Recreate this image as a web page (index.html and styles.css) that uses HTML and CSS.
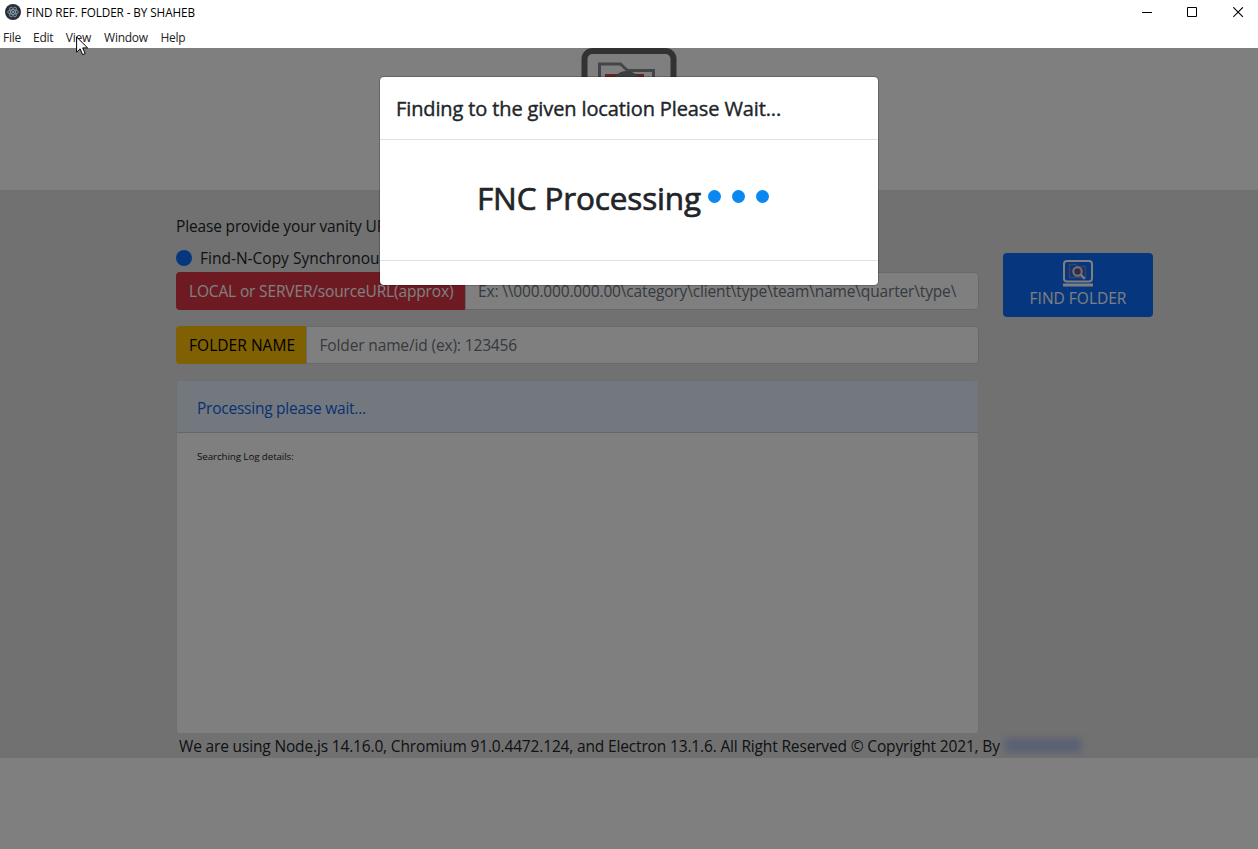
FILE: index.html
```html
<!DOCTYPE html>
<html lang="en">
<head>
<meta charset="utf-8">
<title>FIND REF. FOLDER - BY SHAHEB</title>
<link rel="stylesheet" href="styles.css">
</head>
<body>
<header class="titlebar">
  <svg class="app-icon" width="16" height="16" viewBox="0 0 16 16">
    <circle cx="8" cy="8" r="8" fill="#2b2e3a"/>
    <g fill="none" stroke="#8ba8ae" stroke-width=".8">
      <ellipse cx="8" cy="8" rx="5.4" ry="2.2"/>
      <ellipse cx="8" cy="8" rx="5.4" ry="2.2" transform="rotate(60 8 8)"/>
      <ellipse cx="8" cy="8" rx="5.4" ry="2.2" transform="rotate(120 8 8)"/>
    </g>
    <circle cx="8" cy="8" r=".9" fill="#9fc0c6"/>
  </svg>
  <span class="app-title">FIND REF. FOLDER - BY SHAHEB</span>
  <div class="window-controls">
    <svg width="11" height="11" viewBox="0 0 11 11"><path d="M0 5.5h10" stroke="#000"/></svg>
    <svg width="11" height="11" viewBox="0 0 11 11"><path d="M.5.5h9v9h-9z" fill="none" stroke="#000"/></svg>
    <svg width="11" height="11" viewBox="0 0 11 11"><path d="M.3.3l9.6 9.6M9.9.3L.3 9.9" stroke="#000" stroke-width="1.1"/></svg>
  </div>
</header>
<nav class="menubar">
  <span>File</span><span>Edit</span><span class="menu-view">View</span><span class="menu-window">Window</span><span class="menu-help">Help</span>
</nav>
<svg class="cursor" width="13" height="20" viewBox="0 0 13 20"><path d="M.6 1v15.2l3.5-3.4 2.5 5.9 2.6-1.1-2.5-5.7h4.900z" fill="#fff" stroke="#000" stroke-width="1"/></svg>

<main class="page">
  <div class="brand">
    <svg width="96" height="84" viewBox="0 0 96 84">
      <rect x="3.500" y="3" width="89" height="63" rx="8" fill="none" stroke="#606468" stroke-width="6"/>
      <path d="M18.500 54V16h21l7 6.500h26V54z" fill="none" stroke="#878c90" stroke-width="3"/>
      <path d="M24 26h39v23H24z" fill="#c24a45"/>
      <circle cx="45.500" cy="37" r="11" fill="#fff" stroke="#787e84" stroke-width="6"/>
      <path d="M53 45l13 13" stroke="#787e84" stroke-width="6"/>
      <path d="M0 74h96v8H0z" fill="#606468"/>
    </svg>
  </div>
  <section class="band">
    <div class="columns">
      <div class="form">
        <p class="intro">Please provide your vanity URL</p>
        <label class="check"><i class="radio"></i><span>Find-N-Copy Synchronous</span></label>
        <div class="group group-source">
          <span class="tag tag-red">LOCAL or SERVER/sourceURL(approx)</span>
          <span class="field field-source">Ex: \\000.000.000.00\category\client\type\team\name\quarter\type\</span>
        </div>
        <div class="group">
          <span class="tag tag-yellow">FOLDER NAME</span>
          <span class="field field-folder">Folder name/id (ex): 123456</span>
        </div>
        <div class="log">
          <div class="log-head">Processing please wait...</div>
          <div class="log-body">Searching Log details:</div>
        </div>
      </div>
      <div class="find-button">
        <svg width="30" height="27" viewBox="0 0 30 27">
          <rect x="1" y="1" width="28" height="20.500" rx="3" fill="none" stroke="#fff" stroke-width="2"/>
          <path d="M6.500 17.500v-13h6l2 2h8v11z" fill="none" stroke="#718cc0" stroke-width="1.300"/>
          <path d="M8 8.500h3v5H8zM18.500 8.500h2.500v5h-2.500z" fill="#a54668"/>
          <circle cx="14.500" cy="11.500" r="4.200" fill="#6b5590" stroke="#e4e9f4" stroke-width="2"/>
          <path d="M17.500 14.500l4.300 4.300" stroke="#f2f5fb" stroke-width="2.400"/>
          <path d="M0 23.500h30v3H0z" fill="#fff"/>
        </svg>
        <span>FIND FOLDER</span>
      </div>
    </div>
    <footer class="credits"><span>We are using Node.js 14.16.0, Chromium 91.0.4472.124, and Electron 13.1.6. All Right Reserved © Copyright 2021, By</span><span class="author"></span></footer>
  </section>
  <div class="backdrop">
    <div class="modal">
      <div class="modal-head">Finding to the given location Please Wait...</div>
      <div class="modal-body"><span>FNC Processing</span><i class="dot"></i><i class="dot"></i><i class="dot"></i></div>
      <div class="modal-foot"></div>
    </div>
  </div>
</main>
</body>
</html>
```
FILE: styles.css
```css
* { box-sizing: border-box; }

body {
  margin: 0;
  height: 849px;
  display: flex;
  flex-direction: column;
  overflow: hidden;
  background: #fff;
  color: #212529;
  font: 15.5px/24px "Open Sans", "Noto Sans", sans-serif;
  letter-spacing: -.155px;
  white-space: nowrap;
}

svg { display: block; }

/* window chrome */
.titlebar {
  height: 26px;
  display: flex;
  align-items: center;
  padding: 0 14px 2px 5px;
  color: #000;
  font-size: 11.7px;
  letter-spacing: -.07px;
}
.app-title { margin-left: 5px; }
.window-controls { margin-left: auto; display: flex; gap: 35px; }
.window-controls svg:first-child { margin-right: -1px; }

.menubar {
  height: 22px;
  display: flex;
  padding: 0 0 0 3px;
  gap: 12px;
  color: #222;
  font-size: 12px;
  line-height: 24px;
  letter-spacing: -.25px;
}
.menu-view { margin-left: .5px; }
.menu-window { margin-left: 1px; }
.menu-help { margin-left: .5px; }
.cursor { position: absolute; left: 76px; top: 36px; z-index: 5; }

/* page */
.page { position: relative; flex: 1; }
.brand { height: 142px; display: flex; justify-content: center; }

.band { height: 568px; background: #e2e2e2; padding: 24px 105px 0 176px; }
.columns { display: grid; grid-template-columns: 803px 150px; justify-content: space-between; }

.intro { margin: 0; height: 28px; }
.check { display: flex; gap: 8px; align-items: center; height: 30px; padding-top: 2px; letter-spacing: 0; }
.radio { width: 16px; height: 16px; border-radius: 50%; background: #0d6efd; }

.group { display: flex; height: 38px; margin-bottom: 16px; }
.tag { padding: 7px 0 0 13px; border-radius: 4px 0 0 4px; }
.tag-red { width: 289px; background: #dc3545; color: #fff; }
.tag-yellow { width: 130px; background: #ffc107; color: #000; letter-spacing: .04px; }
.field {
  flex: 1;
  padding: 6px 12px;
  background: #fff;
  border: 1px solid #ced4da;
  border-radius: 0 4px 4px 0;
  color: #6c757d;
}
.field-folder { padding-left: 12.500px; letter-spacing: -.14px; }

.log { height: 353px; margin-bottom: 1px; border: 1px solid #dfdfdf; border-bottom-color: #fff; border-radius: 4px; background: #fff; overflow: hidden; }
.log-head {
  height: 52px;
  padding: 15px 20px;
  background: #e7f1ff;
  border-bottom: 1px solid #c6cfdd;
  color: #0c63e4;
  letter-spacing: -.24px;
}
.log-body { padding: 16px 20px; font-size: 9.8px; line-height: 15px; letter-spacing: -.1px; }

.find-button {
  height: 64px;
  margin-top: 39px;
  padding-top: 7px;
  display: flex;
  flex-direction: column;
  align-items: center;
  border-radius: 4px;
  background: #0d6efd;
  color: #fff;
  letter-spacing: 0;
}
.find-button span { margin-top: -1px; }

.credits { display: flex; padding-left: 3px; letter-spacing: -.157px; }
.author { width: 76px; height: 15px; margin: 4px 0 0 5px; background: #b5c3e6; filter: blur(3px); }

/* dialog */
.backdrop { position: absolute; inset: 0; background: rgba(0, 0, 0, .5); }
.modal {
  width: 500px;
  height: 210px;
  margin: 28px auto 0;
  border: 1px solid rgba(0, 0, 0, .2);
  border-radius: 5px;
  background: #fff;
  background-clip: padding-box;
}
.modal-head {
  height: 63px;
  padding: 17px 16px;
  border-bottom: 1px solid #dee2e6;
  font-size: 20px;
  line-height: 30px;
  letter-spacing: -.12px;
  -webkit-text-stroke: .4px #212529;
}
.modal-body {
  height: 120px;
  display: flex;
  align-items: center;
  padding: 0 0 5px 97px;
  font-size: 31.5px;
  letter-spacing: -.14px;
  -webkit-text-stroke: .7px #212529;
}
.dot { width: 13px; height: 13px; margin: -3px 0 0 11px; border-radius: 50%; background: #0a87f0; }
.modal-body span + .dot { margin-left: 7px; }
.modal-foot { height: 25px; border-top: 1px solid #dee2e6; }
```
